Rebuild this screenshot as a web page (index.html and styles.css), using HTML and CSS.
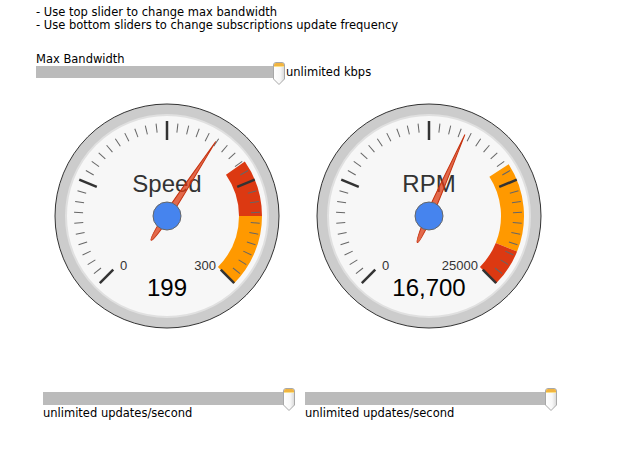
FILE: index.html
```html
<!DOCTYPE html>
<html>
<head>
<meta charset="utf-8">
<link rel="stylesheet" href="styles.css">
</head>
<body>
<svg width="0" height="0" class="defs">
  <defs>
    <linearGradient id="knobfill" x1="0" x2="1" y1="0" y2="0">
      <stop offset="0" stop-color="#ffffff"/>
      <stop offset="0.6" stop-color="#f8f8f8"/>
      <stop offset="1" stop-color="#d8d8d8"/>
    </linearGradient>
    <symbol id="knob" viewBox="0 0 14 25">
      <path d="M1.5,4 Q1.5,1.5 4,1.5 L10,1.5 Q12.5,1.5 12.5,4 L12.5,18 L7,23.5 L1.5,18 Z" fill="url(#knobfill)" stroke="#a8a8a8" stroke-width="1"/>
      <path d="M2,5 L2,4 Q2,2 4,2 L10,2 Q12,2 12,4 L12,5 Z" fill="#f1b440"/>
      <rect x="2" y="5" width="10" height="1" fill="#fbe08a"/>
    </symbol>
    <g id="ticks">
      <g stroke="#666" stroke-width="1">
        <line x1="0" y1="-84" x2="0" y2="-93" transform="rotate(-128.25)"/>
        <line x1="0" y1="-84" x2="0" y2="-93" transform="rotate(-121.5)"/>
        <line x1="0" y1="-84" x2="0" y2="-93" transform="rotate(-114.75)"/>
        <line x1="0" y1="-84" x2="0" y2="-93" transform="rotate(-108)"/>
        <line x1="0" y1="-84" x2="0" y2="-93" transform="rotate(-101.25)"/>
        <line x1="0" y1="-84" x2="0" y2="-93" transform="rotate(-94.5)"/>
        <line x1="0" y1="-84" x2="0" y2="-93" transform="rotate(-87.75)"/>
        <line x1="0" y1="-84" x2="0" y2="-93" transform="rotate(-81)"/>
        <line x1="0" y1="-84" x2="0" y2="-93" transform="rotate(-74.25)"/>
        <line x1="0" y1="-84" x2="0" y2="-93" transform="rotate(-60.75)"/>
        <line x1="0" y1="-84" x2="0" y2="-93" transform="rotate(-54)"/>
        <line x1="0" y1="-84" x2="0" y2="-93" transform="rotate(-47.25)"/>
        <line x1="0" y1="-84" x2="0" y2="-93" transform="rotate(-40.5)"/>
        <line x1="0" y1="-84" x2="0" y2="-93" transform="rotate(-33.75)"/>
        <line x1="0" y1="-84" x2="0" y2="-93" transform="rotate(-27)"/>
        <line x1="0" y1="-84" x2="0" y2="-93" transform="rotate(-20.25)"/>
        <line x1="0" y1="-84" x2="0" y2="-93" transform="rotate(-13.5)"/>
        <line x1="0" y1="-84" x2="0" y2="-93" transform="rotate(-6.75)"/>
        <line x1="0" y1="-84" x2="0" y2="-93" transform="rotate(6.75)"/>
        <line x1="0" y1="-84" x2="0" y2="-93" transform="rotate(13.5)"/>
        <line x1="0" y1="-84" x2="0" y2="-93" transform="rotate(20.25)"/>
        <line x1="0" y1="-84" x2="0" y2="-93" transform="rotate(27)"/>
        <line x1="0" y1="-84" x2="0" y2="-93" transform="rotate(33.75)"/>
        <line x1="0" y1="-84" x2="0" y2="-93" transform="rotate(40.5)"/>
        <line x1="0" y1="-84" x2="0" y2="-93" transform="rotate(47.25)"/>
        <line x1="0" y1="-84" x2="0" y2="-93" transform="rotate(54)"/>
        <line x1="0" y1="-84" x2="0" y2="-93" transform="rotate(60.75)"/>
        <line x1="0" y1="-84" x2="0" y2="-93" transform="rotate(74.25)"/>
        <line x1="0" y1="-84" x2="0" y2="-93" transform="rotate(81)"/>
        <line x1="0" y1="-84" x2="0" y2="-93" transform="rotate(87.75)"/>
        <line x1="0" y1="-84" x2="0" y2="-93" transform="rotate(94.5)"/>
        <line x1="0" y1="-84" x2="0" y2="-93" transform="rotate(101.25)"/>
        <line x1="0" y1="-84" x2="0" y2="-93" transform="rotate(108)"/>
        <line x1="0" y1="-84" x2="0" y2="-93" transform="rotate(114.75)"/>
        <line x1="0" y1="-84" x2="0" y2="-93" transform="rotate(121.5)"/>
        <line x1="0" y1="-84" x2="0" y2="-93" transform="rotate(128.25)"/>
      </g>
      <g stroke="#333" stroke-width="2.5">
        <line x1="0" y1="-76" x2="0" y2="-95" transform="rotate(-135)"/>
        <line x1="0" y1="-76" x2="0" y2="-95" transform="rotate(-67.5)"/>
        <line x1="0" y1="-76" x2="0" y2="-95"/>
        <line x1="0" y1="-76" x2="0" y2="-95" transform="rotate(67.5)"/>
        <line x1="0" y1="-76" x2="0" y2="-95" transform="rotate(135)"/>
      </g>
    </g>
    <path id="needle" d="M0,-89 C1,-60 3.5,-20 3,0 C2.6,16 1.5,29 0,29 C-1.5,29 -2.6,16 -3,0 C-3.5,-20 -1,-60 0,-89 Z"/>
  </defs>
</svg>

<div class="page">
  <div class="help">
    <div>- Use top slider to change max bandwidth</div>
    <div>- Use bottom sliders to change subscriptions update frequency</div>
  </div>

  <div class="bandwidth">
    <div class="caption">Max Bandwidth</div>
    <div class="slider-row">
      <div class="track">
        <div class="bar"></div>
        <svg class="knob"><use href="#knob"/></svg>
      </div>
      <span class="value">unlimited kbps</span>
    </div>
  </div>

  <div class="gauges">
    <svg class="gauge" viewBox="-131 -120 262 240" width="262" height="240">
      <circle r="112" fill="#cccccc" stroke="#333333" stroke-width="1"/>
      <circle r="101" fill="#f7f7f7" stroke="#e0e0e0" stroke-width="2"/>
      <path d="M77.82,-54.49 A95,95 0 0 1 95,0 L72,0 A72,72 0 0 0 58.98,-41.30 Z" fill="#dc3912"/>
      <path d="M95,0 A95,95 0 0 1 67.18,67.18 L50.91,50.91 A72,72 0 0 0 72,0 Z" fill="#ff9900"/>
      <use href="#ticks"/>
      <text class="g-title" x="0" y="-24">Speed</text>
      <text class="g-label" x="-47" y="54" text-anchor="start">0</text>
      <text class="g-label" x="49" y="54" text-anchor="end">300</text>
      <text class="g-value" x="0" y="80">199</text>
      <use href="#needle" class="needle" transform="rotate(33.2)"/>
      <circle r="14" fill="#4684ee" stroke="#666666" stroke-width="1"/>
    </svg>
    <svg class="gauge" viewBox="-131 -120 262 240" width="262" height="240">
      <circle r="112" fill="#cccccc" stroke="#333333" stroke-width="1"/>
      <circle r="101" fill="#f7f7f7" stroke="#e0e0e0" stroke-width="2"/>
      <path d="M79.67,-51.74 A95,95 0 0 1 88.08,35.59 L66.76,26.97 A72,72 0 0 0 60.39,-39.21 Z" fill="#ff9900"/>
      <path d="M88.08,35.59 A95,95 0 0 1 67.18,67.18 L50.91,50.91 A72,72 0 0 0 66.76,26.97 Z" fill="#dc3912"/>
      <use href="#ticks"/>
      <text class="g-title" x="0" y="-24">RPM</text>
      <text class="g-label" x="-47" y="54" text-anchor="start">0</text>
      <text class="g-label" x="49" y="54" text-anchor="end">25000</text>
      <text class="g-value" x="0" y="80">16,700</text>
      <use href="#needle" class="needle" transform="rotate(23.8)"/>
      <circle r="14" fill="#4684ee" stroke="#666666" stroke-width="1"/>
    </svg>
  </div>

  <div class="freq">
    <div class="fslider">
      <div class="track wide">
        <div class="bar"></div>
        <svg class="knob"><use href="#knob"/></svg>
      </div>
      <div class="value">unlimited updates/second</div>
    </div>
    <div class="fslider">
      <div class="track wide">
        <div class="bar"></div>
        <svg class="knob"><use href="#knob"/></svg>
      </div>
      <div class="value">unlimited updates/second</div>
    </div>
  </div>
</div>
</body>
</html>
```

FILE: styles.css
```css
html, body {
  margin: 0;
  padding: 0;
  background: #ffffff;
}

.defs {
  position: absolute;
  width: 0;
  height: 0;
}

.page {
  font-family: "DejaVu Sans", Verdana, sans-serif;
  font-size: 11.5px;
  line-height: 13px;
  color: #000;
  padding: 6px 0 0 36px;
}

.help {
  margin: 0;
}

.bandwidth {
  margin-top: 21px;
}

.caption {
  line-height: 13px;
}

.slider-row {
  display: flex;
  align-items: flex-start;
}

.track {
  position: relative;
  width: 250px;
  height: 12px;
  flex: none;
}

.track .bar {
  height: 12px;
  margin-right: 6px;
  background: #bbbbbb;
}

.knob {
  position: absolute;
  right: 0;
  top: -5px;
  width: 14px;
  height: 25px;
}

.slider-row .value {
  line-height: 13px;
}

.gauges {
  display: flex;
  margin-top: 17px;
}

.gauge {
  display: block;
  flex: none;
}

.g-title {
  font-family: "Liberation Sans", Arial, sans-serif;
  font-size: 24px;
  fill: #333333;
  text-anchor: middle;
}

.g-label {
  font-family: "Liberation Sans", Arial, sans-serif;
  font-size: 13px;
  fill: #333333;
}

.g-value {
  font-family: "Liberation Sans", Arial, sans-serif;
  font-size: 24px;
  fill: #000000;
  text-anchor: middle;
}

.needle {
  fill: #dc3912;
  fill-opacity: 0.75;
  stroke: #c63310;
  stroke-width: 1;
}

.freq {
  display: flex;
  gap: 9px;
  margin-top: 56px;
  padding-left: 7px;
}

.fslider {
  display: flex;
  flex-direction: column;
}

.track.wide {
  width: 253px;
  height: 13px;
}

.track.wide .bar {
  height: 13px;
  margin-right: 8px;
}

.fslider .value {
  line-height: 13px;
  margin-top: 2px;
}
```
